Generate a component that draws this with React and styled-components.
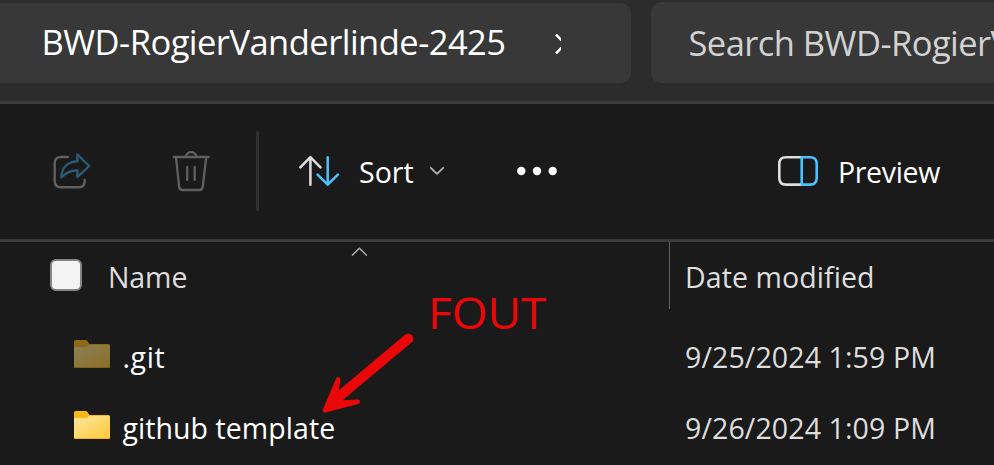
import React from 'react';
import styled, { createGlobalStyle } from 'styled-components';

const GlobalStyle = createGlobalStyle`
  *, *::before, *::after { box-sizing: border-box; }
  body { margin: 0; background: #1a1a1a; overflow: hidden; }
  svg { display: block; flex: none; }
`;

const Window = styled.main`
  position: relative;
  width: 994px;
  height: 465px;
  overflow: hidden;
  background: #1a1a1a;
  color: #ffffff;
  font-family: 'Open Sans', 'Noto Sans', sans-serif;
  font-size: 28.5px;
  white-space: nowrap;
`;

const AddressBar = styled.header`
  display: flex;
  align-items: flex-end;
  gap: 20px;
  height: 104px;
  padding-bottom: 18px;
  border-bottom: 3px solid #3b3b3b;
  background: #2c2c2c;
`;

const Breadcrumb = styled.nav`
  display: flex;
  align-items: center;
  flex: none;
  width: 631px;
  height: 80px;
  padding: 0 0 3px 41.5px;
  border-radius: 0 10px 10px 0;
  background: #383838;
  font-size: 34.5px;
`;

const Crumb = styled.span`
  width: 513px;
  letter-spacing: -0.53px;
`;

const CrumbChevron = styled.svg`
  margin-top: 5px;
`;

const SearchBox = styled.div`
  display: flex;
  align-items: center;
  flex: none;
  width: 420px;
  height: 81px;
  padding-left: 37.5px;
  border-radius: 10px;
  background: #383838;
  color: #d2d2d2;
  font-size: 34.5px;
  letter-spacing: -0.55px;
`;

const Toolbar = styled.div`
  display: flex;
  align-items: center;
  height: 138px;
  padding: 0 0 1px 52px;
  border-bottom: 3px solid #3b3b3b;
`;

const ToolButton = styled.button`
  display: flex;
  align-items: center;
  flex: none;
  width: ${({ $width }) => $width}px;
  height: 80px;
  padding: 0;
  border: 0;
  background: none;
  color: inherit;
  font: inherit;
  letter-spacing: ${({ $tracking = 0 }) => $tracking}px;
`;

const ToolLabel = styled.span`
  margin: 2px 0 0 ${({ $gap }) => $gap}px;
`;

const Divider = styled.span`
  width: 3px;
  height: 80px;
  margin-right: 39px;
  border-radius: 2px;
  background: #303030;
`;

const SortChevron = styled.svg`
  margin-left: 15px;
`;

const columns = 'grid-template-columns: 669px 1fr;';

const ListHeader = styled.div`
  display: grid;
  ${columns}
  height: 79px;
  color: #dedede;
`;

const NameHeader = styled.div`
  position: relative;
  display: flex;
  align-items: center;
  height: 70px;
  padding-left: 50px;
  letter-spacing: -0.1px;
`;

const Checkbox = styled.span`
  width: 32px;
  height: 32px;
  margin: 0 26px 4px 0;
  border: 2px solid #858585;
  border-radius: 6px;
  background: #f3f3f3;
`;

const SortCaret = styled.svg`
  position: absolute;
  left: 351px;
  top: 5px;
`;

const DateHeader = styled.div`
  display: flex;
  align-items: center;
  height: 67px;
  padding: 3px 0 0 15px;
  border-left: 1px solid #636363;
  letter-spacing: 0.08px;
`;

const Row = styled.div`
  display: grid;
  ${columns}
  align-items: center;
  height: 71px;
`;

const FileCell = styled.div`
  display: flex;
  align-items: center;
  gap: 12.5px;
  padding-left: 74px;
`;

const FolderSvg = styled.svg`
  margin-bottom: 6px;
`;

const FileName = styled.span`
  letter-spacing: ${({ $tracking }) => $tracking}px;
`;

const DateCell = styled.div`
  padding-left: 16px;
  color: #dedede;
  letter-spacing: 0.12px;
`;

const Annotation = styled.div`
  position: absolute;
  left: 428px;
  top: 283px;
  color: #ea0707;
  font-size: 43px;
  line-height: 60px;
  transform: scaleX(1.07);
  transform-origin: left;
`;

const ArrowSvg = styled.svg`
  position: absolute;
  left: 318px;
  top: 328px;
`;

function ShareIcon() {
  return (
    <svg width="40" height="40" viewBox="52 151 40 40" fill="none" strokeWidth="2.4" strokeLinecap="round" strokeLinejoin="round">
      <path stroke="#606060" d="M67.8 157H61Q54.7 157 54.7 163.3V181Q54.7 187.3 61 187.3H78.5Q84.7 187.3 84.7 181V179.8" />
      <path stroke="#295a75" d="M77.4 154.4L89.2 166L77.4 177.2V170.3C70.5 170.3 66.5 172.4 61.3 177.3C61.7 168.2 67.2 161.8 77.4 161.3Z" />
    </svg>
  );
}

function TrashIcon() {
  return (
    <svg width="38" height="42" viewBox="172 150 38 42" fill="none" stroke="#606060" strokeWidth="2.3" strokeLinecap="round" strokeLinejoin="round">
      <path d="M173.7 157H208.6M186 157C186 150.6 196.2 150.6 196.2 157M176 157.5L179.2 187Q179.6 190 182.6 190H199.4Q202.3 190 202.7 187L206.2 157.5M187.2 167V180M194.7 167V180" />
    </svg>
  );
}

function SortIcon() {
  return (
    <svg width="42" height="34" viewBox="298 154 42 34" fill="none" strokeWidth="2.5" strokeLinecap="round" strokeLinejoin="round">
      <path stroke="#dedede" d="M310.4 184.7V157.2M300.3 167.3L310.4 157.2L320.5 167.3" />
      <path stroke="#4cc2ff" d="M327.7 157.2V184.7M317.6 174.6L327.7 184.7L337.9 174.6" />
    </svg>
  );
}

function MoreIcon() {
  return (
    <svg width="42" height="12" viewBox="516 165 42 12" fill="#ffffff">
      <circle cx="521.3" cy="171" r="4.2" />
      <circle cx="537" cy="171" r="4.2" />
      <circle cx="552.7" cy="171" r="4.2" />
    </svg>
  );
}

function PreviewIcon() {
  return (
    <svg width="42" height="34" viewBox="777 154 42 34" fill="none" strokeWidth="2.6" strokeLinejoin="round">
      <path stroke="#dedede" d="M801.7 157.3H786Q779.3 157.3 779.3 164V178Q779.3 184.6 786 184.6H801.7" />
      <path stroke="#4cc2ff" d="M801.7 157.3H810Q816.7 157.3 816.7 164V178Q816.7 184.6 810 184.6H801.7Z" />
    </svg>
  );
}

function FolderIcon({ id, tab, from, to, edge }) {
  return (
    <FolderSvg width="36" height="28" viewBox="0 0 36 28">
      <defs>
        <linearGradient id={id} x1="0" y1="0" x2="1" y2="1">
          <stop offset="0" stopColor={from} />
          <stop offset="1" stopColor={to} />
        </linearGradient>
      </defs>
      <path fill={tab} d="M0 1.5Q0 0 1.5 0H11.5Q12.7 0 13.4 1L15.5 4H34.5Q36 4 36 5.5V14H0Z" />
      <path fill={`url(#${id})`} d="M0 7H11.8Q13 7 13.8 6.2L15.2 5H35Q36 5 36 6V26.5Q36 28 34.5 28H1.5Q0 28 0 26.5Z" />
      <path fill={edge} d="M0.2 27H35.8Q35.4 28 34.5 28H1.5Q0.6 28 0.2 27Z" />
    </FolderSvg>
  );
}

const files = [
  { name: '.git', date: '9/25/2024 1:59 PM', tracking: 0.6, icon: { id: 'hidden', tab: '#8c6817', from: '#8d8058', to: '#8a6e25', edge: '#806018' } },
  { name: 'github template', date: '9/26/2024 1:09 PM', tracking: 0.06, icon: { id: 'plain', tab: '#fdb913', from: '#ffe79e', to: '#ffc937', edge: '#f2b327' } },
];

export default function App() {
  return (
    <Window>
      <GlobalStyle />
      <AddressBar>
        <Breadcrumb>
          <Crumb>BWD-RogierVanderlinde-2425</Crumb>
          <CrumbChevron width="6.5" height="22" viewBox="0 0 6.5 22" fill="none" stroke="#ffffff" strokeWidth="2.4">
            <path d="M1 1.6L10 11L1 20.4" />
          </CrumbChevron>
        </Breadcrumb>
        <SearchBox>Search BWD-RogierVanderlinde-2425</SearchBox>
      </AddressBar>
      <Toolbar>
        <ToolButton $width={120} aria-label="Share"><ShareIcon /></ToolButton>
        <ToolButton $width={84} aria-label="Delete"><TrashIcon /></ToolButton>
        <Divider />
        <ToolButton $width={218}>
          <SortIcon />
          <ToolLabel $gap={19}>Sort</ToolLabel>
          <SortChevron width="16" height="10" viewBox="0 0 16 10" fill="none" stroke="#b5b5b5" strokeWidth="1.8" strokeLinecap="round" strokeLinejoin="round">
            <path d="M1.8 1.8L8 7.8L14.2 1.8" />
          </SortChevron>
        </ToolButton>
        <ToolButton $width={261} aria-label="See more"><MoreIcon /></ToolButton>
        <ToolButton $width={170} $tracking={-0.35}>
          <PreviewIcon />
          <ToolLabel $gap={19}>Preview</ToolLabel>
        </ToolButton>
      </Toolbar>
      <ListHeader>
        <NameHeader>
          <Checkbox />
          Name
          <SortCaret width="17" height="10" viewBox="0 0 17 10" fill="none" stroke="#b0b0b0" strokeWidth="1.4">
            <path d="M1 8.5L8.4 1.3L15.8 8.5" />
          </SortCaret>
        </NameHeader>
        <DateHeader>Date modified</DateHeader>
      </ListHeader>
      {files.map((file) => (
        <Row key={file.name}>
          <FileCell>
            <FolderIcon {...file.icon} />
            <FileName $tracking={file.tracking}>{file.name}</FileName>
          </FileCell>
          <DateCell>{file.date}</DateCell>
        </Row>
      ))}
      <Annotation>FOUT</Annotation>
      <ArrowSvg width="100" height="90" viewBox="318 328 100 90" fill="#ea0707" stroke="#ea0707" strokeLinecap="round" strokeLinejoin="round">
        <path strokeWidth="10" d="M408.3 338.7L340 395.8" />
        <path strokeWidth="4.6" d="M325 410.2L338.2 379.5L335.5 396L342 402.5L357.7 401.7Z" />
      </ArrowSvg>
    </Window>
  );
}
